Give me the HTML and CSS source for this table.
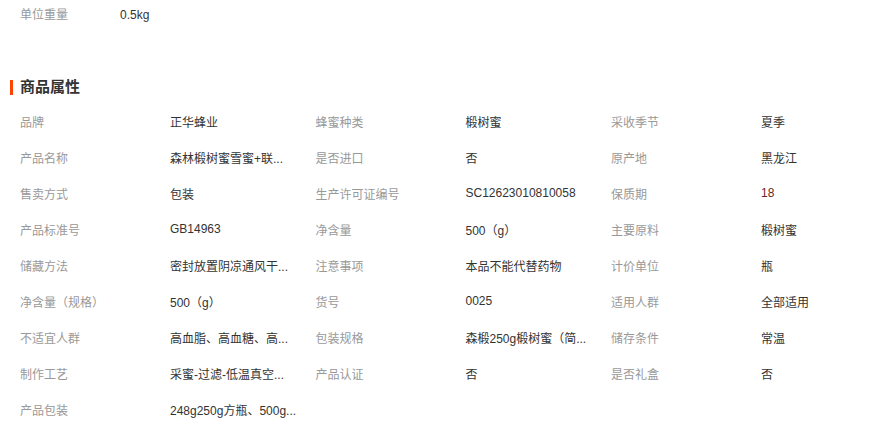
FILE: index.html
```html
<!DOCTYPE html>
<html lang="zh-CN">
<head>
  <meta charset="UTF-8">
  <title>商品属性</title>
  <link rel="stylesheet" href="styles.css">
</head>
<body>
  <div class="base-row">
    <span class="base-label">单位重量</span>
    <span class="base-value">0.5kg</span>
  </div>

  <h3 class="section-title">商品属性</h3>

  <ul class="attr-list">
    <li><span class="attr-label">品牌</span><span class="attr-value">正华蜂业</span></li>
    <li><span class="attr-label">蜂蜜种类</span><span class="attr-value">椴树蜜</span></li>
    <li><span class="attr-label">采收季节</span><span class="attr-value">夏季</span></li>

    <li><span class="attr-label">产品名称</span><span class="attr-value">森林椴树蜜雪蜜+联...</span></li>
    <li><span class="attr-label">是否进口</span><span class="attr-value">否</span></li>
    <li><span class="attr-label">原产地</span><span class="attr-value">黑龙江</span></li>

    <li><span class="attr-label">售卖方式</span><span class="attr-value">包装</span></li>
    <li><span class="attr-label">生产许可证编号</span><span class="attr-value">SC12623010810058</span></li>
    <li><span class="attr-label">保质期</span><span class="attr-value highlight">18</span></li>

    <li><span class="attr-label">产品标准号</span><span class="attr-value">GB14963</span></li>
    <li><span class="attr-label">净含量</span><span class="attr-value">500（g）</span></li>
    <li><span class="attr-label">主要原料</span><span class="attr-value">椴树蜜</span></li>

    <li><span class="attr-label">储藏方法</span><span class="attr-value">密封放置阴凉通风干...</span></li>
    <li><span class="attr-label">注意事项</span><span class="attr-value">本品不能代替药物</span></li>
    <li><span class="attr-label">计价单位</span><span class="attr-value">瓶</span></li>

    <li><span class="attr-label">净含量（规格）</span><span class="attr-value">500（g）</span></li>
    <li><span class="attr-label">货号</span><span class="attr-value">0025</span></li>
    <li><span class="attr-label">适用人群</span><span class="attr-value">全部适用</span></li>

    <li><span class="attr-label">不适宜人群</span><span class="attr-value">高血脂、高血糖、高...</span></li>
    <li><span class="attr-label">包装规格</span><span class="attr-value">森椴250g椴树蜜（简...</span></li>
    <li><span class="attr-label">储存条件</span><span class="attr-value">常温</span></li>

    <li><span class="attr-label">制作工艺</span><span class="attr-value">采蜜-过滤-低温真空...</span></li>
    <li><span class="attr-label">产品认证</span><span class="attr-value">否</span></li>
    <li><span class="attr-label">是否礼盒</span><span class="attr-value">否</span></li>

    <li><span class="attr-label">产品包装</span><span class="attr-value">248g250g方瓶、500g...</span></li>
  </ul>
</body>
</html>
```

FILE: styles.css
```css
body {
  margin: 0;
  background-color: #fff;
  color: #333;
  font-family: "Liberation Sans", "Noto Sans CJK SC", sans-serif;
  font-size: 12px;
  overflow: hidden;
}
.base-row {
  display: flex;
  height: 30px;
  line-height: 30px;
  padding-left: 20px;
}
.base-label {
  width: 100px;
  color: #999;
}
.section-title {
  display: flex;
  align-items: center;
  margin: 47px 0 0;
  height: 20px;
  line-height: 20px;
  font-size: 15px;
  font-weight: bold;
  color: #333;
}
.section-title::before {
  content: "";
  width: 3px;
  height: 15px;
  margin: 0 7px 0 10px;
  background-color: #ff4400;
}
.attr-list {
  list-style: none;
  margin: 6px 0 0;
  padding: 0;
  display: grid;
  grid-template-columns: repeat(3, 295.5px);
  grid-auto-rows: 36px;
}
.attr-list li {
  display: flex;
  align-items: center;
  padding-left: 20px;
}
.attr-label {
  flex: none;
  width: 150px;
  color: #999;
  white-space: nowrap;
}
.attr-value {
  white-space: nowrap;
}
.highlight {
  color: #6c1f1f;
}
```
